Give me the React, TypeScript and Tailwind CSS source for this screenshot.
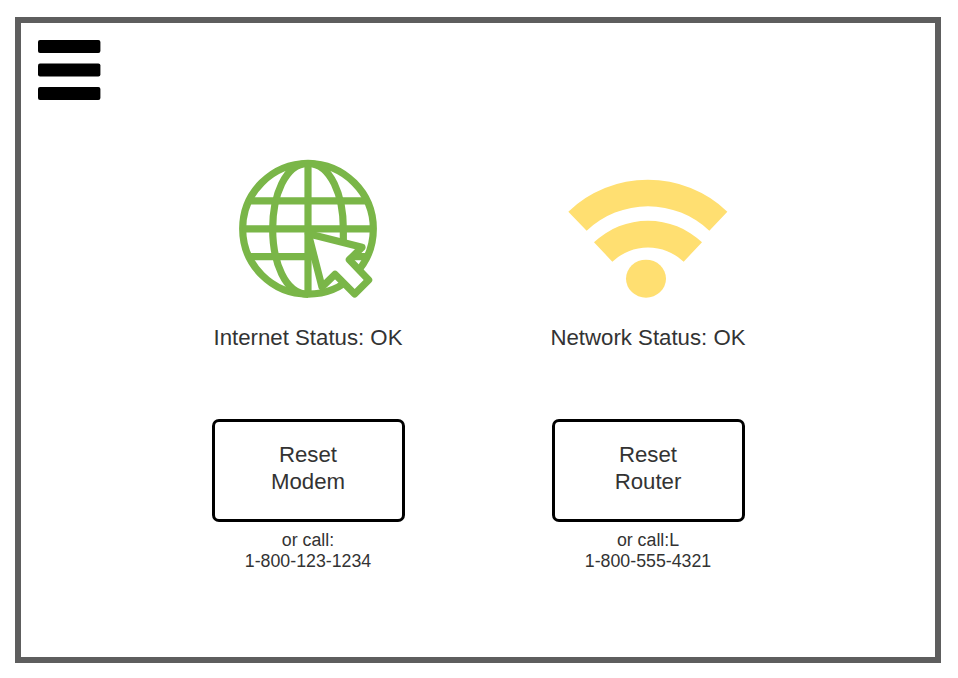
import type { ReactNode } from "react";

const GREEN = "#7ab648";
const YELLOW = "#ffdf71";

function GlobeIcon() {
  return (
    <svg className="h-[160px] w-[160px]" viewBox="0 0 480 480" fill="none" stroke={GREEN} strokeWidth="21.5" strokeLinejoin="round">
      <circle cx="234" cy="236.5" r="196" />
      <path d="M234 433C165 433 128 335 128 236.5S165 40 234 40S340 138 340 236.5V275" />
      <path d="M234 40v393M38 236.5h392M56 152.5h356M56 320h356" />
      <path d="M235 251L396 292L358 329L416 390L374 432L315 373L276 411Z" fill="#fff" />
    </svg>
  );
}

function WifiIcon() {
  return (
    <svg className="h-[140px] w-[180px]" viewBox="0 0 540 420" fill={YELLOW}>
      <path d="M25 125A344 344 0 0 1 502 125L448 182A268 268 0 0 0 80 182Z" />
      <path d="M102 217A235 235 0 0 1 426 217L371 275A156 156 0 0 0 157 275Z" />
      <ellipse cx="258" cy="326" rx="60" ry="57" />
    </svg>
  );
}

type DeviceProps = {
  icon: ReactNode;
  status: string;
  device: string;
  hint: string;
  phone: string;
};

function DevicePanel({ icon, status, device, hint, phone }: DeviceProps) {
  return (
    <section className="flex w-[340px] flex-col items-center text-center">
      <div className="flex h-[160px] items-start justify-center">{icon}</div>
      <p className="mt-[14.5px] text-[22.22px] leading-[26.67px]">{status}</p>
      <button className="mt-[67.5px] h-[103px] w-[193px] rounded-[7px] border-3 border-black pb-[5px] text-[22.22px] leading-[27px]">
        Reset
        <br />
        {device}
      </button>
      <p className="mt-[8px] text-[17.78px] leading-[21.33px]">
        {hint}
        <br />
        {phone}
      </p>
    </section>
  );
}

export default function App() {
  return (
    <div className="h-[678px] w-[958px] bg-white px-[15px] pt-[17px] font-['Liberation_Sans',Arial,sans-serif] text-[#333333]">
      <main className="h-[646px] w-[926px] border-6 border-[#5e5e5e]">
        <button aria-label="Menu" className="mt-[17px] ml-[17px] block h-[60px] w-[63px]">
          <svg className="block h-[60px] w-[63px]" viewBox="0 0 63 60">
            <rect width="62.4" height="13" rx="2" />
            <rect y="23.4" width="62.4" height="13.2" rx="2" />
            <rect y="47" width="62.4" height="13" rx="2" />
          </svg>
        </button>
        <div className="mt-[50px] flex pl-[117px]">
          <DevicePanel
            icon={<div className="ml-[4px]"><GlobeIcon /></div>}
            status="Internet Status: OK"
            device="Modem"
            hint="or call:"
            phone="1-800-123-1234"
          />
          <DevicePanel
            icon={<div className="mt-[20px] ml-[4px]"><WifiIcon /></div>}
            status="Network Status: OK"
            device="Router"
            hint="or call:L"
            phone="1-800-555-4321"
          />
        </div>
      </main>
    </div>
  );
}
